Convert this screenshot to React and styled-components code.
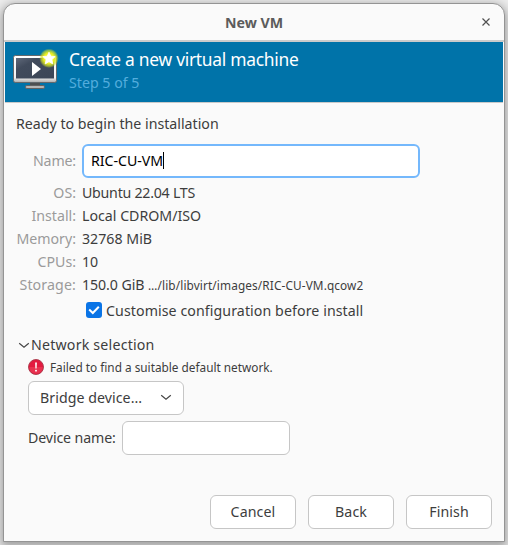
import React from 'react';
import styled, { createGlobalStyle } from 'styled-components';

const GlobalStyle = createGlobalStyle`
  * { box-sizing: border-box; }
  html, body { margin: 0; padding: 0; overflow: hidden; }
  body {
    background: #e9e9e9;
    color: #3d3d3d;
    font-family: "Noto Sans", "Open Sans", sans-serif;
    font-size: 14.2px;
    line-height: 23px;
    white-space: nowrap;
  }
`;

const Desktop = styled.div`
  width: 508px;
  height: 545px;
  padding: 3px;
  background: #ececec;
  overflow: hidden;
`;

const Window = styled.main`
  display: flex;
  flex-direction: column;
  width: 502px;
  height: 539px;
  border: 1px solid #949494;
  border-radius: 12px 12px 0 0;
  background: #fafafa;
  box-shadow: 0 3px 10px 2px rgba(0, 0, 0, 0.32);
  overflow: hidden;
`;

const TitleBar = styled.header`
  display: grid;
  grid-template-columns: 36px 1fr 36px;
  align-items: center;
  height: 38px;
  border-bottom: 2px solid #cbcbcb;
`;

const Title = styled.h1`
  grid-column: 2;
  margin: 0;
  padding-top: 2px;
  color: #5c5c5c;
  font-size: 14.2px;
  line-height: 20px;
  font-weight: 700;
  text-align: center;
`;

const CloseButton = styled.button`
  display: flex;
  align-items: center;
  justify-content: center;
  width: 20px;
  height: 20px;
  margin-left: 8px;
  padding: 0;
  border: 0;
  background: none;
`;

const Banner = styled.section`
  display: flex;
  height: 61px;
  margin: 0 1px;
  padding: 5px 0 0 8px;
  gap: 10px;
  background: #0073a9;
  border-bottom: 1px solid #c9c9c9;
  color: #fff;
`;

const BannerIcon = styled.svg`
  flex: none;
  width: 46px;
  height: 44px;
  margin-top: 1px;
`;

const BannerTitle = styled.div`
  font-size: 17.4px;
  line-height: 24px;
  letter-spacing: -0.27px;
`;

const BannerStep = styled.div`
  color: #53addd;
  line-height: 22px;
  margin-top: 1px;
`;

const Body = styled.section`
  flex: 1;
  display: flex;
  flex-direction: column;
  padding: 9px 12px 12px 12px;
`;

const Intro = styled.div`
  height: 32px;
`;

const Details = styled.dl`
  display: grid;
  grid-template-columns: 60px 1fr;
  column-gap: 6px;
  align-items: center;
  margin: 0;
`;

const Facts = styled(Details)`
  grid-auto-rows: 23px;
  margin-top: 3px;
`;

const Label = styled.dt`
  color: #9b9b9b;
  text-align: right;
  letter-spacing: ${(p) => p.$track || 0}px;
  margin-top: ${(p) => (p.$raised ? -2 : 0)}px;
`;

const Value = styled.dd`
  margin: 0;
  letter-spacing: ${(p) => p.$track || 0}px;
`;

const Small = styled.span`
  font-size: 11.8px;
  letter-spacing: ${(p) => p.$track || 0}px;
`;

const NameField = styled.div`
  display: flex;
  align-items: center;
  width: 338px;
  height: 34px;
  padding: 0 0 2px 7px;
  border: 2px solid #74b8fc;
  border-radius: 6px;
  background: #fff;
  color: #000;
  letter-spacing: -0.03px;
`;

const Caret = styled.span`
  width: 1px;
  height: 17px;
  background: #000;
`;

const CheckRow = styled.label`
  display: flex;
  align-items: center;
  gap: 4px;
  height: 24px;
  margin: 2px 0 0 70px;
  letter-spacing: 0.08px;
`;

const CheckBox = styled.span`
  display: flex;
  width: 16px;
  height: 16px;
  border-radius: 3px;
  background: #0a74e6;
`;

const Expander = styled.div`
  display: flex;
  align-items: center;
  height: 23px;
  margin: 11px 0 0 2px;
  gap: 1px;
  letter-spacing: 0.2px;
`;

const Group = styled.div`
  display: flex;
  flex-direction: column;
  align-items: flex-start;
  padding-left: 12px;
`;

const Warning = styled.div`
  display: flex;
  align-items: center;
  gap: 6px;
  height: 22px;
`;

const control = `
  border: 1px solid #c6c6c6;
  border-radius: 6px;
  background: #fff;
  height: 34px;
`;

const Select = styled.div`
  ${control}
  display: flex;
  align-items: center;
  justify-content: space-between;
  width: 156px;
  margin-top: 3px;
  padding: 0 11px 2px;
  letter-spacing: 0.05px;
`;

const DeviceRow = styled.div`
  display: flex;
  align-items: center;
  margin-top: 6px;
  letter-spacing: -0.13px;
`;

const DeviceLabel = styled.span`
  width: 94px;
  padding-bottom: 2px;
`;

const DeviceInput = styled.div`
  ${control}
  width: 168px;
`;

const Actions = styled.footer`
  display: flex;
  justify-content: flex-end;
  gap: 12px;
  margin-top: auto;
`;

const Button = styled.button`
  ${control}
  width: 86px;
  padding: 0 0 2px;
  color: inherit;
  font: inherit;
  letter-spacing: 0.1px;
`;

const Chevron = () => (
  <svg width="12" height="12" viewBox="0 0 12 12" fill="none" stroke="#454545" strokeWidth="1.15">
    <path d="M1.2 4.2 L6 8.2 L10.8 4.2" />
  </svg>
);

const MonitorIcon = () => (
  <BannerIcon viewBox="0 0 46 44">
    <defs>
      <linearGradient id="frame" x1="0" y1="0" x2="0" y2="1">
        <stop offset="0" stopColor="#fff" />
        <stop offset="0.82" stopColor="#f1f1f1" />
        <stop offset="1" stopColor="#a9a9a9" />
      </linearGradient>
      <linearGradient id="screen" x1="0" y1="0" x2="1" y2="1">
        <stop offset="0" stopColor="#60697a" />
        <stop offset="0.3" stopColor="#414b5c" />
        <stop offset="1" stopColor="#3c4657" />
      </linearGradient>
      <radialGradient id="glow">
        <stop offset="0" stopColor="#ffff70" />
        <stop offset="0.55" stopColor="#e8ee20" />
        <stop offset="0.8" stopColor="#cfe029" stopOpacity="0.65" />
        <stop offset="1" stopColor="#b5d52c" stopOpacity="0" />
      </radialGradient>
    </defs>
    <path d="M17 34 H27 V38 H17 Z" fill="#4d4f51" />
    <rect x="12.5" y="37.5" width="19" height="3" rx="1.3" fill="#b5b5b5" stroke="#626262" />
    <rect x="0.5" y="7.5" width="43" height="27" rx="1.8" fill="url(#frame)" stroke="#63686c" />
    <rect x="3" y="10" width="38" height="20.5" fill="url(#screen)" />
    <path d="M19 14 V28 L28 21 Z" fill="#fff" />
    <circle cx="36" cy="10.3" r="9.8" fill="url(#glow)" />
    <path
      d="M36 4.2 L37.8 8.2 L42.2 8.6 L38.9 11.6 L39.8 15.9 L36 13.7 L32.2 15.9 L33.1 11.6 L29.8 8.6 L34.2 8.2 Z"
      fill="#fff"
      stroke="#fff"
      strokeWidth="0.8"
      strokeLinejoin="round"
    />
  </BannerIcon>
);

const ErrorIcon = () => (
  <svg width="16" height="16" viewBox="0 0 16 16">
    <circle cx="8" cy="8" r="7.5" fill="#e3193f" stroke="#a8394a" strokeWidth="0.9" />
    <path d="M1.2 8 A6.8 6.8 0 0 0 14.8 8 Z" fill="#ed4a60" opacity="0.5" />
    <path d="M7.1 3.6 H8.9 L8.6 9.5 H7.4 Z" fill="#fff" />
    <rect x="7.1" y="10.8" width="1.8" height="1.8" rx="0.6" fill="#fff" />
  </svg>
);

const facts = [
  { label: 'OS:', value: 'Ubuntu 22.04 LTS', track: -0.25 },
  { label: 'Install:', value: 'Local CDROM/ISO' },
  { label: 'Memory:', value: '32768 MiB' },
  { label: 'CPUs:', value: '10' },
];

export default function App() {
  return (
    <Desktop>
      <GlobalStyle />
      <Window>
        <TitleBar>
          <Title>New VM</Title>
          <CloseButton aria-label="Close">
            <svg width="10" height="10" viewBox="0 0 10 10" stroke="#505050" strokeWidth="1.2">
              <path d="M1.5 1.5 L8.5 8.5 M8.5 1.5 L1.5 8.5" />
            </svg>
          </CloseButton>
        </TitleBar>
        <Banner>
          <MonitorIcon />
          <div>
            <BannerTitle>Create a new virtual machine</BannerTitle>
            <BannerStep>Step 5 of 5</BannerStep>
          </div>
        </Banner>
        <Body>
          <Intro>Ready to begin the installation</Intro>
          <Details>
            <Label $track={-0.16} $raised>Name:</Label>
            <Value>
              <NameField>
                RIC-CU-VM
                <Caret />
              </NameField>
            </Value>
          </Details>
          <Facts>
            {facts.map((f) => (
              <React.Fragment key={f.label}>
                <Label>{f.label}</Label>
                <Value $track={f.track}>{f.value}</Value>
              </React.Fragment>
            ))}
            <Label $track={0.12}>Storage:</Label>
            <Value $track={-0.08}>
              150.0 GiB <Small $track={0.12}>…/lib/libvirt/images/RIC-CU-VM.qcow2</Small>
            </Value>
          </Facts>
          <CheckRow>
            <CheckBox>
              <svg width="16" height="16" viewBox="0 0 16 16" fill="none" stroke="#fff" strokeWidth="2">
                <path d="M3.2 7.6 L6.8 11 L12.8 4.8" />
              </svg>
            </CheckBox>
            Customise configuration before install
          </CheckRow>
          <Expander>
            <Chevron />
            Network selection
          </Expander>
          <Group>
            <Warning>
              <ErrorIcon />
              <Small>Failed to find a suitable default network.</Small>
            </Warning>
            <Select>
              Bridge device...
              <Chevron />
            </Select>
            <DeviceRow>
              <DeviceLabel>Device name:</DeviceLabel>
              <DeviceInput />
            </DeviceRow>
          </Group>
          <Actions>
            <Button>Cancel</Button>
            <Button>Back</Button>
            <Button>Finish</Button>
          </Actions>
        </Body>
      </Window>
    </Desktop>
  );
}
